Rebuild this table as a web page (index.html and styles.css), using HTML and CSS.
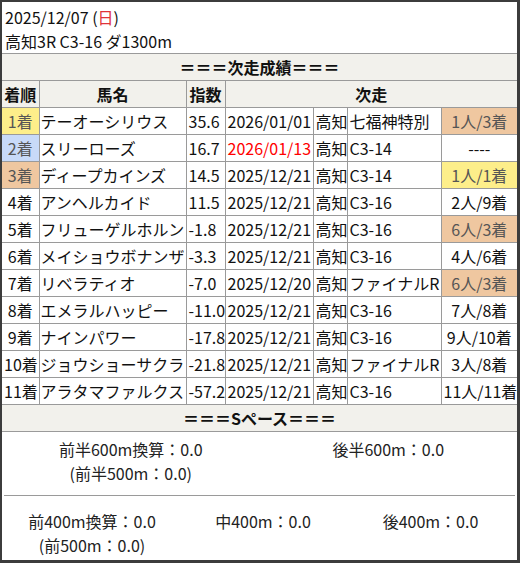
FILE: index.html
```html
<!DOCTYPE html>
<html lang="ja">
<head>
<meta charset="utf-8">
<title>次走成績</title>
<link rel="stylesheet" href="styles.css">
</head>
<body>
<div class="panel">
  <div class="info">
    <div>2025/12/07 (<span class="sun">日</span>)</div>
    <div>高知3R C3-16 ダ1300m</div>
  </div>
  <table class="results">
    <colgroup>
      <col class="c-rank"><col class="c-name"><col class="c-idx"><col class="c-date"><col class="c-place"><col class="c-race"><col class="c-res">
    </colgroup>
    <thead>
      <tr><th colspan="7" class="sec">＝＝＝次走成績＝＝＝</th></tr>
      <tr class="head"><th>着順</th><th>馬名</th><th>指数</th><th colspan="4">次走</th></tr>
    </thead>
    <tbody>
      <tr><td class="rank gold">1着</td><td class="name">テーオーシリウス</td><td>35.6</td><td>2026/01/01</td><td>高知</td><td>七福神特別</td><td class="res bronze">1人/3着</td></tr>
      <tr><td class="rank silver">2着</td><td class="name">スリーローズ</td><td>16.7</td><td class="red">2026/01/13</td><td>高知</td><td>C3-14</td><td class="res">----</td></tr>
      <tr><td class="rank bronze">3着</td><td class="name">ディープカインズ</td><td>14.5</td><td>2025/12/21</td><td>高知</td><td>C3-14</td><td class="res gold">1人/1着</td></tr>
      <tr><td class="rank">4着</td><td class="name">アンヘルカイド</td><td>11.5</td><td>2025/12/21</td><td>高知</td><td>C3-16</td><td class="res">2人/9着</td></tr>
      <tr><td class="rank">5着</td><td class="name">フリューゲルホルン</td><td>-1.8</td><td>2025/12/21</td><td>高知</td><td>C3-16</td><td class="res bronze">6人/3着</td></tr>
      <tr><td class="rank">6着</td><td class="name">メイショウボナンザ</td><td>-3.3</td><td>2025/12/21</td><td>高知</td><td>C3-16</td><td class="res">4人/6着</td></tr>
      <tr><td class="rank">7着</td><td class="name">リベラティオ</td><td>-7.0</td><td>2025/12/20</td><td>高知</td><td>ファイナルR</td><td class="res bronze">6人/3着</td></tr>
      <tr><td class="rank">8着</td><td class="name">エメラルハッピー</td><td>-11.0</td><td>2025/12/21</td><td>高知</td><td>C3-16</td><td class="res">7人/8着</td></tr>
      <tr><td class="rank">9着</td><td class="name">ナインパワー</td><td>-17.8</td><td>2025/12/21</td><td>高知</td><td>C3-16</td><td class="res">9人/10着</td></tr>
      <tr><td class="rank">10着</td><td class="name">ジョウショーサクラ</td><td>-21.8</td><td>2025/12/21</td><td>高知</td><td>ファイナルR</td><td class="res">3人/8着</td></tr>
      <tr><td class="rank">11着</td><td class="name">アラタマファルクス</td><td>-57.2</td><td>2025/12/21</td><td>高知</td><td>C3-16</td><td class="res">11人/11着</td></tr>
      <tr><th colspan="7" class="sec">＝＝＝Sペース＝＝＝</th></tr>
    </tbody>
  </table>
  <div class="pace pace-half">
    <div class="item"><div>前半600m換算：0.0</div><div>(前半500m：0.0)</div></div>
    <div class="item"><div>後半600m：0.0</div></div>
  </div>
  <div class="divider"></div>
  <div class="pace pace-third">
    <div class="item"><div>前400m換算：0.0</div><div>(前500m：0.0)</div></div>
    <div class="item"><div>中400m：0.0</div></div>
    <div class="item"><div>後400m：0.0</div></div>
  </div>
</div>
</body>
</html>
```
FILE: styles.css
```css
html, body {
  margin: 0;
  padding: 0;
  background: #3c3c3c;
}
body {
  width: 520px;
  height: 563px;
  overflow: hidden;
  font-family: "Noto Sans CJK JP", "Noto Sans", sans-serif;
  font-size: 16px;
  line-height: 24px;
  color: #111;
}
.panel {
  margin: 2px 3px 3px 2px;
  width: 515px;
  height: 558px;
  background: #fff;
  overflow: hidden;
}
.info {
  padding: 3px 3px 0 3px;
}
.sun {
  color: #e0333a;
}
.results {
  width: 515px;
  table-layout: fixed;
  border-collapse: collapse;
}
.c-rank { width: 37px; }
.c-name { width: 147px; }
.c-idx { width: 39px; }
.c-date { width: 88px; }
.c-place { width: 34px; }
.c-race { width: 94px; }
.c-res { width: 76px; }
.results th,
.results td {
  border: 1px solid #9a9a9a;
  padding: 1px 2px;
  white-space: nowrap;
  overflow: visible;
  text-align: left;
  font-weight: normal;
  height: 24px;
}
.results tr > :first-child { border-left: none; }
.results tr > :last-child { border-right: none; }
.results th {
  font-weight: bold;
  text-align: center;
  background: #f2f1ec;
}
.results th.sec {
  background: #f2f1ec;
}
.results td.name {
  padding: 1px 1px;
}
.results td.rank,
.results td.res {
  text-align: center;
}
.results td.gold {
  background: #fdee8a;
  color: #555;
}
.results td.silver {
  background: #c8daf8;
  color: #555;
}
.results td.bronze {
  background: #efc7a0;
  color: #555;
}
.results td.red {
  color: #ff0000;
}
.pace {
  display: grid;
  text-align: center;
  color: #222;
}
.pace-half {
  grid-template-columns: 1fr 1fr;
  padding: 5px 0 10px;
}
.pace-third {
  grid-template-columns: 180px 162px 1fr;
  padding: 13px 0 0;
}
.divider {
  margin: 0 2px;
  border-top: 1px solid #9a9a9a;
}
```
